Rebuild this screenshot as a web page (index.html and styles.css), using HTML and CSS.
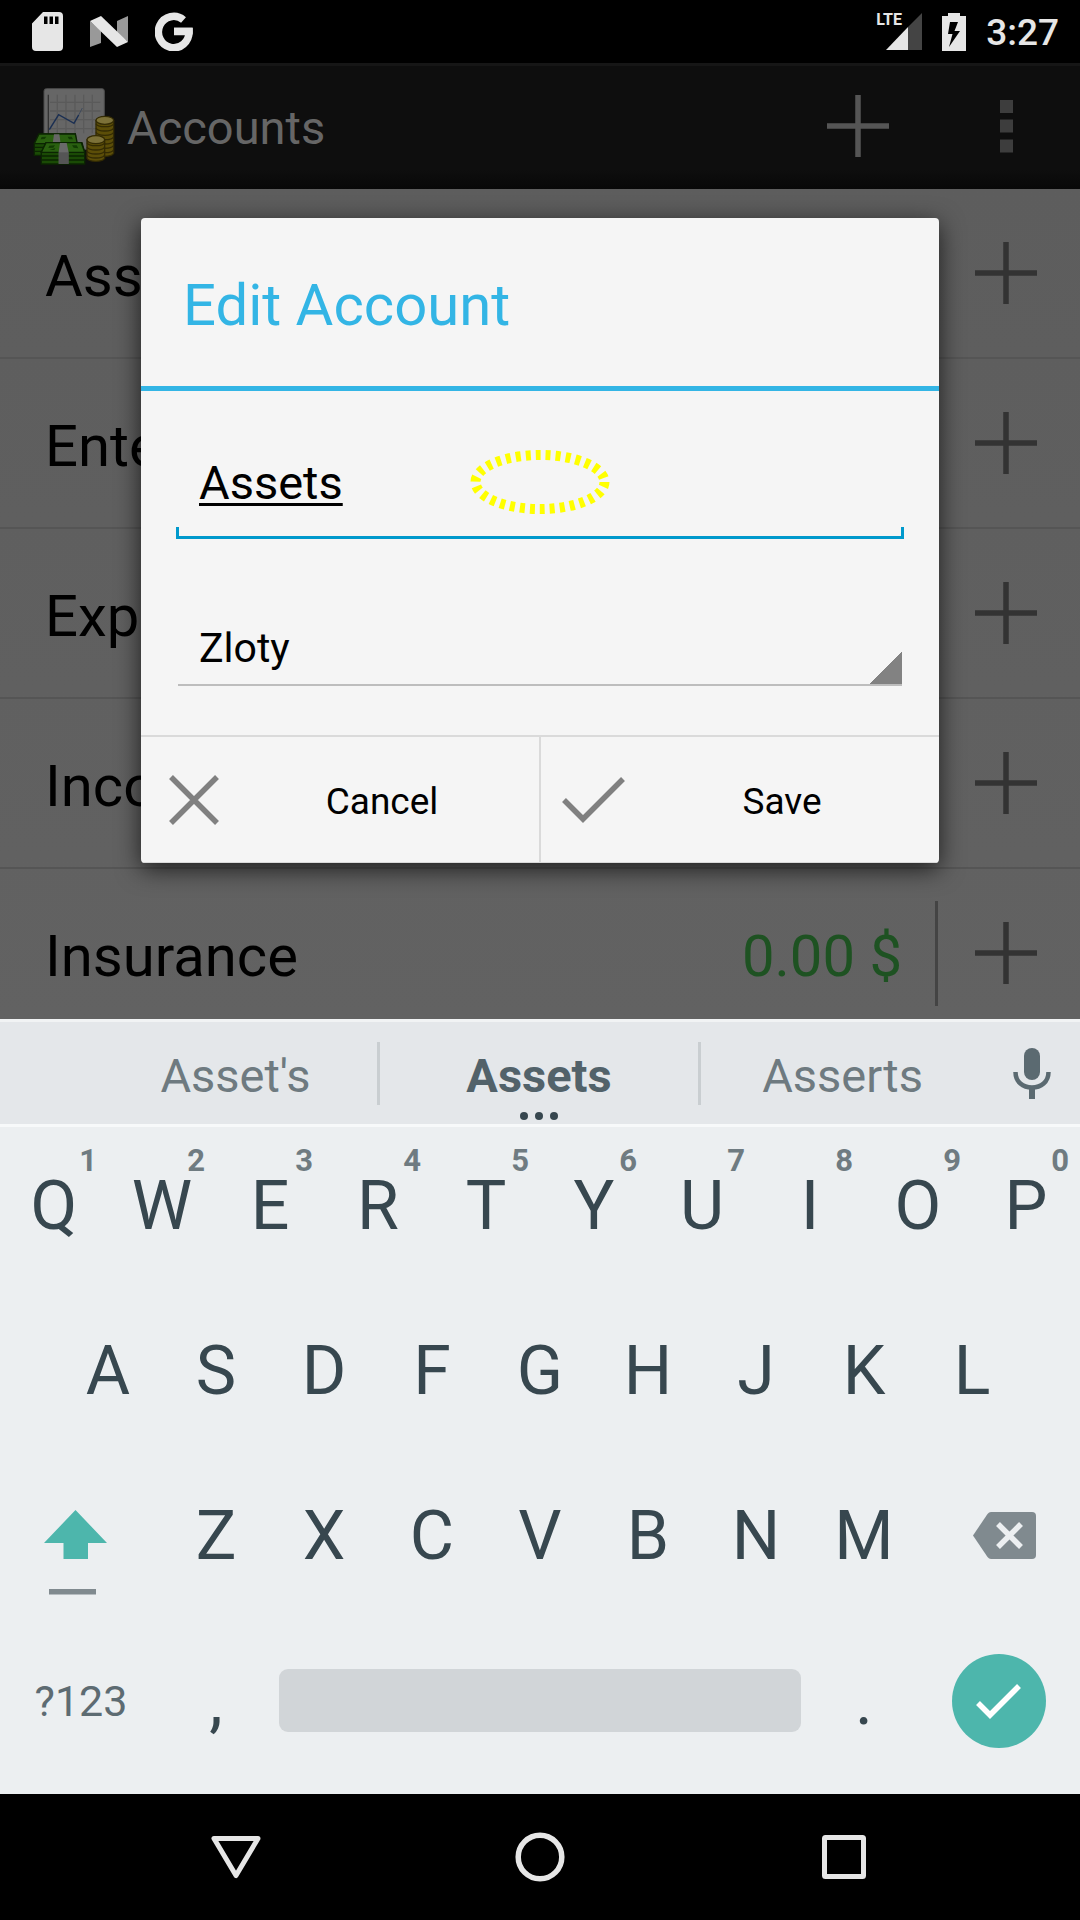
FILE: index.html
```html
<!DOCTYPE html>
<html lang="en">
<head>
<meta charset="utf-8">
<meta name="viewport" content="width=device-width, initial-scale=1">
<title>Accounts</title>
<link rel="stylesheet" href="styles.css">
</head>
<body>
<svg width="0" height="0" class="sprite" aria-hidden="true">
  <symbol id="plus" viewBox="0 0 62 62"><path d="M31 0V62M0 31H62" fill="none" stroke="currentColor" stroke-width="5.5"/></symbol>
</svg>

<header class="status">
  <div class="status-group status-left">
    <svg width="31" height="39" viewBox="0 0 31 39"><path fill="#e6e6e6" fill-rule="evenodd" d="M11 0H27a4 4 0 0 1 4 4V35a4 4 0 0 1-4 4H4a4 4 0 0 1-4-4V11.500ZM12 4.500V12H15.500V4.500ZM17.500 4.500V12H21V4.500ZM23 4.500V12H26.500V4.500Z"/></svg>
    <svg width="38" height="31" viewBox="0 0 38 31"><path fill="#999" d="M0 5L11 15V27L0 31ZM27 5L38 0V26L27 17Z"/><path fill="#e6e6e6" d="M0 5L11 0L38 26L27 31Z"/></svg>
    <svg width="38" height="39" viewBox="0 0 38 39"><path fill="none" stroke="#e6e6e6" stroke-width="7.500" d="M28.500 8A15.300 15.700 0 1 0 34 19.500H19"/><path fill="#e6e6e6" d="M19 15.700H37.700V22.500H19Z"/></svg>
  </div>
  <div class="status-group status-right">
    <div class="signal">
      <svg width="36" height="37" viewBox="0 0 36 37"><path fill="#444" d="M22 14L36 0V37H22Z"/><path fill="#e6e6e6" d="M0 37L22 14V37Z"/></svg>
      <span class="lte">LTE</span>
    </div>
    <svg width="24" height="38" viewBox="0 0 24 38"><path fill="#e6e6e6" fill-rule="evenodd" d="M6 3V0H18V3H24V38H0V3ZM8 9L6 21H10.500L7 34L18 18H12.500L16 9Z"/></svg>
    <span class="clock">3:27</span>
  </div>
</header>

<main class="app">
  <div class="appbar">
    <svg class="logo" width="84" height="80" viewBox="96 258 252 240">
      <rect x="132" y="266" width="181" height="182" rx="7" fill="#666" stroke="#4b4b4b" stroke-width="3"/>
      <path d="M172 284V400M198 284V400M225 284V400M251 284V400M277 284V400M150 307H301M150 333H301M150 359H301M150 386H301" stroke="#5a5a5a" stroke-width="4"/>
      <path d="M145 284V412" stroke="#333" stroke-width="4"/>
      <path d="M148 389L176 344L222 370L236 345" fill="none" stroke="#1b2f52" stroke-width="4.500"/><path d="M236 345L247 324" stroke="#3f4a5c" stroke-width="3"/>
      <g fill="#5c4e08" stroke="#332b04" stroke-width="4">
        <path d="M288 362V460A27 11 0 0 0 341 460V362Z"/>
        <path fill="none" d="M288 371a27 11 0 0 0 53 0M288 384a27 11 0 0 0 53 0M288 397a27 11 0 0 0 53 0M288 410a27 11 0 0 0 53 0M288 423a27 11 0 0 0 53 0M288 436a27 11 0 0 0 53 0M288 449a27 11 0 0 0 53 0"/>
        <ellipse cx="314.500" cy="361" rx="26.500" ry="12" fill="#7c7138"/>
        <path d="M261 420V475A27 11 0 0 0 314 475V420Z"/>
        <path fill="none" d="M261 428a27 11 0 0 0 53 0M261 441a27 11 0 0 0 53 0M261 453a27 11 0 0 0 53 0M261 465a27 11 0 0 0 53 0"/>
        <ellipse cx="287.500" cy="419" rx="26.500" ry="12" fill="#7c7138"/>
      </g>
      <g stroke="#0b2402" stroke-width="4">
        <path fill="#1a4a05" d="M103 431V466H229V431L226 402H117Z"/><path fill="#2a6010" d="M117 402H226L232 431H103Z"/>
        <path d="M103 442H229M103 454H229"/>
        <path fill="#666" stroke="none" d="M162 403H178L182 431H158Z"/>
        <path fill="#1a4a05" d="M124 457V492H254V457L246 428H138Z"/><path fill="#2a6010" d="M138 428H244L254 457H124Z"/>
        <path d="M124 468H254M124 480H254"/>
      </g>
      <path fill="#123c04" d="M125 411l14-1-5 7-12 1ZM203 410l12 0 4 8-12 0ZM148 437l17-1-5 7-15 1ZM148 450l18-6-3 6ZM216 436l14 0 5 9-14-2Z"/>
      <path fill="#6a6a6a" d="M180 429H200L206 457V492H176V457Z"/><path fill="#444" d="M176 457H206V492H176Z" opacity=".55"/>
    </svg>
    <h1 class="appbar-title">Accounts</h1>
    <button class="bar-btn bar-add" aria-label="Add account"><svg width="62" height="62"><use href="#plus"/></svg></button>
    <button class="bar-btn bar-more" aria-label="More options"><svg width="13" height="53" viewBox="0 0 13 53"><path fill="currentColor" d="M0 0H13V13H0ZM0 19.500H13V32.500H0ZM0 39.500H13V52.500H0Z"/></svg></button>
  </div>

  <ul class="list">
    <li class="row"><span class="row-name">Assets</span><button class="row-add" aria-label="Add to Assets"><svg width="62" height="62"><use href="#plus"/></svg></button></li>
    <li class="row"><span class="row-name">Entertainment</span><button class="row-add" aria-label="Add to Entertainment"><svg width="62" height="62"><use href="#plus"/></svg></button></li>
    <li class="row"><span class="row-name">Expenses</span><button class="row-add" aria-label="Add to Expenses"><svg width="62" height="62"><use href="#plus"/></svg></button></li>
    <li class="row"><span class="row-name">Income</span><button class="row-add" aria-label="Add to Income"><svg width="62" height="62"><use href="#plus"/></svg></button></li>
    <li class="row"><span class="row-name">Insurance</span><span class="row-amount">0.00 $</span><button class="row-add" aria-label="Add to Insurance"><svg width="62" height="62"><use href="#plus"/></svg></button></li>
  </ul>

  <div class="overlay">
    <form class="dialog" role="dialog" aria-labelledby="dialog-title">
      <h2 class="dialog-title" id="dialog-title">Edit Account</h2>
      <div class="dialog-body">
        <div class="name-field">
          <input class="name-input" type="text" value="Assets" aria-label="Account name">
          <svg class="marker" width="140" height="64" viewBox="0 0 140 64"><ellipse cx="70" cy="32" rx="64.500" ry="27" fill="none" stroke="#ff0" stroke-width="10" stroke-dasharray="5 5"/></svg>
        </div>
        <select class="currency" aria-label="Currency"><option>Zloty</option></select>
      </div>
      <div class="dialog-actions">
        <button type="button" class="action"><svg width="84" height="84" viewBox="0 0 84 84"><path d="M20 20L66 66M66 20L20 66" fill="none" stroke="#808080" stroke-width="5.500"/></svg><span class="action-label">Cancel</span></button>
        <button type="button" class="action"><svg width="84" height="84" viewBox="0 0 84 84"><path d="M13 43L32 62L72 22" fill="none" stroke="#808080" stroke-width="5.500"/></svg><span class="action-label">Save</span></button>
      </div>
    </form>
  </div>
</main>

<section class="keyboard" aria-label="Keyboard">
  <div class="suggestions">
    <button class="suggestion">Asset's</button>
    <button class="suggestion suggestion-main">Assets<svg class="dots" width="38" height="8" viewBox="0 0 38 8"><circle cx="4" cy="4" r="4"/><circle cx="19" cy="4" r="4"/><circle cx="34" cy="4" r="4"/></svg></button>
    <button class="suggestion">Asserts</button>
    <button class="mic" aria-label="Voice input"><svg width="38" height="51" viewBox="0 0 38 51"><rect x="11" y="0" width="16" height="32" rx="8" fill="#5b6a71"/><path d="M2.500 24C2.500 34 10 39.500 19 39.500S35.500 34 35.500 24" fill="none" stroke="#5b6a71" stroke-width="4.500"/><path d="M16 40H22V51H16Z" fill="#5b6a71"/></svg></button>
  </div>
  <div class="keys">
    <div class="key-row">
      <button class="key">Q<span class="hint">1</span></button>
      <button class="key">W<span class="hint">2</span></button>
      <button class="key">E<span class="hint">3</span></button>
      <button class="key">R<span class="hint">4</span></button>
      <button class="key">T<span class="hint">5</span></button>
      <button class="key">Y<span class="hint">6</span></button>
      <button class="key">U<span class="hint">7</span></button>
      <button class="key">I<span class="hint">8</span></button>
      <button class="key">O<span class="hint">9</span></button>
      <button class="key">P<span class="hint">0</span></button>
    </div>
    <div class="key-row">
      <button class="key key-indent">A</button>
      <button class="key">S</button>
      <button class="key">D</button>
      <button class="key">F</button>
      <button class="key">G</button>
      <button class="key">H</button>
      <button class="key">J</button>
      <button class="key">K</button>
      <button class="key">L</button>
    </div>
    <div class="key-row">
      <button class="key key-wide key-shift" aria-label="Shift"><svg width="64" height="134" viewBox="0 0 64 134"><path fill="#4db6ac" d="M31.500 41L63 74H44V90H19.500V74H0Z"/><path fill="#808a8f" d="M5 120H52V125.500H5Z"/></svg></button>
      <button class="key">Z</button>
      <button class="key">X</button>
      <button class="key">C</button>
      <button class="key">V</button>
      <button class="key">B</button>
      <button class="key">N</button>
      <button class="key">M</button>
      <button class="key key-wide key-delete" aria-label="Delete"><svg width="63" height="47" viewBox="0 0 63 47"><path fill="#808a8f" d="M18 0H59a4 4 0 0 1 4 4V43a4 4 0 0 1-4 4H18Q16 47 14.500 45L0 23.500L14.500 2Q16 0 18 0Z"/><path d="M25 12L48 35M48 12L25 35" stroke="#eceff1" stroke-width="5.500"/></svg></button>
    </div>
    <div class="key-row">
      <button class="key key-wide key-symbols">?123</button>
      <button class="key">,</button>
      <button class="key key-space" aria-label="Space"><span class="space-bar"></span></button>
      <button class="key">.</button>
      <button class="key key-wide" aria-label="Done"><svg width="94" height="94" viewBox="0 0 94 94"><circle cx="47" cy="47" r="47" fill="#4db6ac"/><path d="M26 49L38 61L67 32" fill="none" stroke="#fff" stroke-width="5.500"/></svg></button>
    </div>
  </div>
</section>

<nav class="navbar">
  <button class="nav-btn" aria-label="Back"><svg width="50" height="50" viewBox="0 0 50 50"><path d="M3 6.500H47L25 43.500Z" fill="none" stroke="#e6e6e6" stroke-width="5" stroke-linejoin="round"/></svg></button>
  <button class="nav-btn" aria-label="Home"><svg width="50" height="50" viewBox="0 0 50 50"><circle cx="25" cy="25" r="21.800" fill="none" stroke="#e6e6e6" stroke-width="5.500"/></svg></button>
  <button class="nav-btn" aria-label="Recent apps"><svg width="50" height="50" viewBox="0 0 50 50"><rect x="5.500" y="5.500" width="39" height="39" rx="1" fill="none" stroke="#e6e6e6" stroke-width="5"/></svg></button>
</nav>
</body>
</html>
```
FILE: styles.css
```css
* {
  box-sizing: border-box;
}

body {
  margin: 0;
  min-height: 100vh;
  display: flex;
  flex-direction: column;
  background: #000;
  font-family: Roboto, "Noto Sans", sans-serif;
}

button,
input,
select {
  margin: 0;
  padding: 0;
  border: 0;
  border-radius: 0;
  background: none;
  color: inherit;
  font: inherit;
  outline: none;
}

h1,
h2,
ul {
  margin: 0;
  padding: 0;
  font-weight: 400;
  list-style: none;
}

svg {
  display: block;
  flex: none;
}

.sprite {
  position: absolute;
}

/* Status bar */

.status {
  height: 63px;
  padding: 0 21px 0 32px;
  display: flex;
  justify-content: space-between;
  align-items: center;
  color: #e6e6e6;
}

.status-group {
  display: flex;
  align-items: center;
}

.status-left {
  gap: 27px;
}

.status-right {
  gap: 20px;
}

.signal {
  position: relative;
  padding-left: 10px;
}

.lte {
  position: absolute;
  left: 0;
  top: 0;
  font-size: 16px;
  line-height: 14px;
  font-weight: 700;
}

.clock {
  padding-top: 2px;
  font-size: 37px;
  line-height: 42px;
  font-weight: 500;
}

/* Account list */

.app {
  position: relative;
  flex: 1 0 0;
  min-height: 0;
  display: flex;
  flex-direction: column;
  overflow: hidden;
}

.appbar {
  flex: none;
  height: 126px;
  padding-left: 32px;
  display: flex;
  align-items: center;
  box-shadow: inset 0 3px #161616;
  background: linear-gradient(#0e0e0e 85%, #080808);
  color: #666;
}

.appbar-title {
  flex: 1;
  padding: 3px 0 0 11px;
  font-size: 47px;
  line-height: 56px;
}

.bar-btn {
  width: 148px;
  height: 100%;
  display: grid;
  place-items: center;
}

.bar-add {
  color: #555;
}

.bar-more {
  color: #3d3d3d;
}

.list {
  flex: 1 0 0;
  min-height: 0;
  overflow: hidden;
  background: linear-gradient(#5d5d5d, #626262);
}

.row {
  height: 170px;
  padding: 0 6px 0 45px;
  display: flex;
  align-items: center;
  border-bottom: 2px solid #555;
  font-size: 58px;
  line-height: 68px;
  color: #000;
}

.row-name {
  flex: 1;
  padding-top: 6px;
}

.row-amount {
  padding: 6px 33px 0 0;
  color: #1e5222;
}

.row-add {
  width: 139px;
  height: 105px;
  display: grid;
  place-items: center;
  border-left: 3px solid #444;
  color: #333;
}

/* Edit dialog */

.overlay {
  position: absolute;
  inset: 0;
  padding: 0 141px 2px;
  display: grid;
  align-items: center;
}

.dialog {
  border-radius: 4px;
  overflow: hidden;
  background: #f5f5f5;
  box-shadow: 0 6px 24px rgba(0, 0, 0, 0.7);
  color: #000;
}

.dialog-title {
  padding: 53px 42px 47px;
  border-bottom: 5px solid #33b5e5;
  font-size: 58px;
  line-height: 68px;
  color: #33b5e5;
}

.dialog-body {
  padding: 35px 35px 49px;
}

.name-field {
  position: relative;
}

.name-input {
  width: 100%;
  height: 113px;
  padding: 0 23px;
  font-size: 47px;
  text-decoration: underline;
  text-decoration-thickness: 3px;
  text-underline-offset: 4px;
  text-decoration-skip-ink: none;
  background:
    linear-gradient(#0099cc, #0099cc) left bottom / 3px 12px no-repeat,
    linear-gradient(#0099cc, #0099cc) right bottom / 3px 12px no-repeat,
    linear-gradient(#0099cc, #0099cc) left bottom / 100% 3px no-repeat;
}

.marker {
  position: absolute;
  left: 50%;
  top: 50%;
  transform: translate(-50%, -50%);
}

.currency {
  appearance: none;
  display: block;
  width: calc(100% - 4px);
  height: 73px;
  margin: 74px 2px 0;
  padding-left: 21px;
  border-bottom: 2px solid #bdbdbd;
  font-size: 41px;
  background: linear-gradient(to bottom right, transparent 50%, #828282 50%) right bottom / 32px 32px no-repeat;
}

.dialog-actions {
  display: flex;
  border-top: 2px solid #dadada;
}

.action {
  flex: 1;
  height: 126px;
  padding: 0 10px;
  display: flex;
  align-items: center;
  border-bottom: 1px solid #dadada;
  font-size: 37px;
  line-height: 44px;
}

.action + .action {
  border-left: 2px solid #dadada;
}

.action-label {
  flex: 1;
  padding-top: 5px;
  text-align: center;
}

/* Keyboard */

.keyboard {
  flex: none;
  background: #eceff1;
  color: #37474f;
}

.suggestions {
  height: 108px;
  padding-left: 94px;
  display: flex;
  align-items: center;
  border-top: 3px solid #f1f3f4;
  border-bottom: 3px solid #f7f9fa;
  background: #e4e7ea;
}

.suggestion {
  position: relative;
  flex: 8 1 0;
  height: 63px;
  padding-top: 5px;
  font-size: 47px;
  line-height: 56px;
  color: #6e7a80;
}

.suggestion-main {
  flex-grow: 9;
  border-left: 3px solid #c9ced1;
  border-right: 3px solid #c9ced1;
  font-weight: 700;
  color: #52626a;
}

.dots {
  position: absolute;
  left: 50%;
  bottom: -15px;
  transform: translateX(-50%);
  fill: #37474f;
}

.mic {
  width: 96px;
  height: 100%;
  display: grid;
  place-items: center;
}

.keys {
  padding-bottom: 7px;
}

.key-row {
  display: grid;
  grid-template-columns: repeat(20, 1fr);
  height: 165px;
}

.key {
  position: relative;
  grid-column: span 2;
  padding-bottom: 8px;
  display: flex;
  align-items: center;
  justify-content: center;
  font-size: 68px;
  line-height: 80px;
}

.key-indent {
  grid-column: 2 / span 2;
}

.key-wide {
  grid-column: span 3;
}

.key-space {
  grid-column: span 10;
}

.space-bar {
  flex: 1;
  height: 63px;
  margin: 0 9px;
  border-radius: 9px;
  background: #d1d5d8;
}

.key-shift {
  padding-right: 10px;
}

.key-delete {
  padding-left: 11px;
}

.key-symbols {
  font-size: 43px;
  color: #5d6b72;
}

.hint {
  position: absolute;
  right: 11px;
  top: 16px;
  font-size: 31px;
  line-height: 36px;
  font-weight: 700;
  color: #6f7b81;
}

/* Navigation bar */

.navbar {
  flex: none;
  height: 126px;
  display: flex;
  justify-content: center;
}

.nav-btn {
  flex: 0 1 304px;
  display: grid;
  place-items: center;
}
```
